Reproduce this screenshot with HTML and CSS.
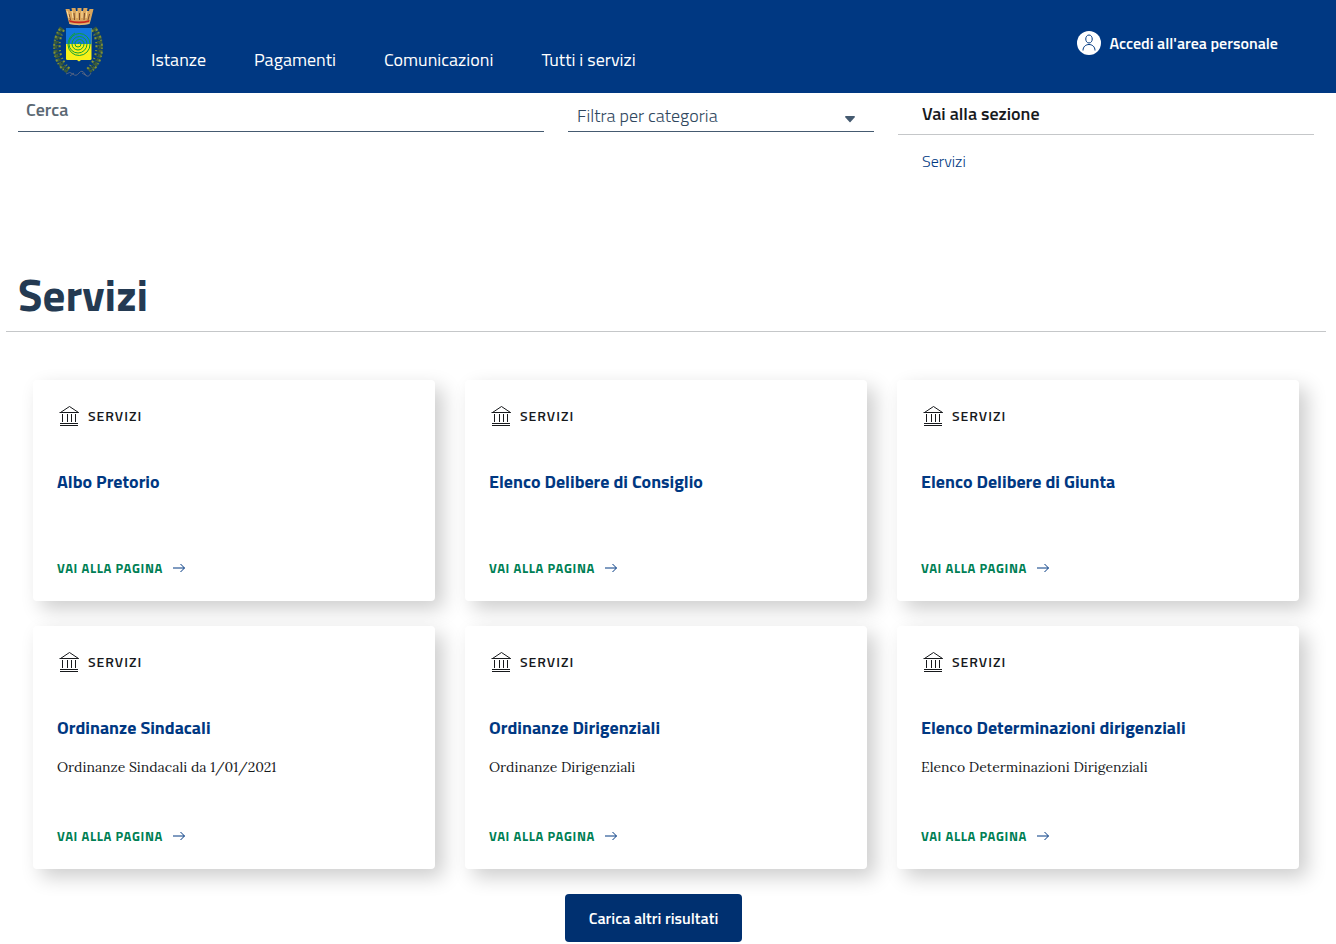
FILE: index.html
```
<!DOCTYPE html>
<html lang="it">

<head>
    <meta charset="UTF-8">
    <meta name="viewport" content="width=device-width, initial-scale=1.0">
    <title>Servizi</title>
    <link rel="stylesheet" href="styles.css">
</head>

<body>
    <!-- Shared icons -->
    <svg class="sprite" aria-hidden="true">
        <symbol id="icon-pa" viewBox="0 0 24 24">
            <path d="M3.500 8.500 12.500 2.500l9 6zM2.500 8.500h19M5.500 10v8M10.500 10v8M14.500 10v8M18.500 10v8M3 19.500h18M3 21.500h18" fill="none" stroke="currentColor" />
        </symbol>
        <symbol id="icon-arrow" viewBox="0 0 14 10">
            <path d="M1 5h11.500M8.500 1l4 4-4 4" fill="none" stroke="currentColor" />
        </symbol>
    </svg>

    <header class="header">
        <a href="#" class="logo" aria-label="Home">
            <svg width="54" height="72" viewBox="0 0 54 72">
                <!-- laurel and oak branches -->
                <g fill="none">
                    <path d="M11 22C2 34 2 55 17 65" stroke="#3c5c3c" stroke-width="5" stroke-dasharray="4 1 3 1" />
                    <path d="M9 23C0 34 1 56 14 65" stroke="#7f9038" stroke-width="2" stroke-dasharray="2 2 1 3" />
                    <path d="M13 24C6 36 7 52 19 63" stroke="#8a962f" stroke-width="2" stroke-dasharray="2 3 1 2" />
                    <path d="M11 25C4 36 5 53 17 65" stroke="#1d3f3a" stroke-dasharray="2 2" />
                    <path d="M43 22C52 34 52 55 38 65" stroke="#3c5c3c" stroke-width="5" stroke-dasharray="4 1 3 1" />
                    <path d="M45 23C54 34 53 56 41 65" stroke="#7f9038" stroke-width="2" stroke-dasharray="2 2 1 3" />
                    <path d="M41 24C48 36 47 52 36 63" stroke="#8a962f" stroke-width="2" stroke-dasharray="2 3 1 2" />
                    <path d="M43 25C50 36 49 53 38 65" stroke="#1d3f3a" stroke-dasharray="2 2" />
                    <path d="M15 68q4-3 7 0t6-1 6 1 6-1M19 70l4-3M36 70l-5-3" stroke="#536383" />
                </g>
                <!-- shield -->
                <path d="M15 22h25.500v31q0 1-1.500 1H30l-2 1.500L26 54h-9.500q-1.500 0-1.500-1z" fill="#f7f01a" />
                <path d="M15 22h25.500v16H15z" fill="#1478e0" />
                <path d="M27 38a1.500 1.500 0 0 1 3 0a3 3 0 0 1-6 0a4.500 4.500 0 0 1 9 0a6 6 0 0 1-12 0a7.500 7.500 0 0 1 15 0a9 9 0 0 1-18 0a10.500 10.500 0 0 1 21 0a11 11 0 0 1-22 1q0-8 7-12" fill="none" stroke="#12a235" />
                <!-- crown -->
                <path d="M14.500 3h4l.5 2h2l-.5-3h4l.5 3h1.500V2h4v3h1.500l.5-3h4l-.5 3h2l.500-2h4l-3 12-1 3q-10 2-20 0l-1-3z" fill="#d9a55c" />
                <path d="M18 8l1.500 6M23 7l.5 7M28.500 7v7M33.500 7l-.5 7M38.500 8 37 14" stroke="#7a4a2a" fill="none" />
                <path d="M16 5l2 7M21 5l1 7M26 5v7M31 5v7M36 5l-1 7" stroke="#ffe0a0" fill="none" />
                <path d="M18 14q10 3 20.500 0l-.5 2q-10 2.500-19.500 0z" fill="#c9281f" />
                <path d="M18.500 17.500q10 2.500 19 0" stroke="#e5bd80" fill="none" />
            </svg>
        </a>
        <nav class="nav">
            <a href="#">Istanze</a>
            <a href="#">Pagamenti</a>
            <a href="#">Comunicazioni</a>
            <a href="#">Tutti i servizi</a>
        </nav>
        <a href="#" class="login">
            <svg width="24" height="24" viewBox="0 0 24 24">
                <circle cx="12" cy="12" r="12" fill="#fff" />
                <path d="M12 4c4.300 0 4.300 8 0 8s-4.300-8 0-8zM6 19.500c0-8 12-8 12 0" fill="none" stroke="#003882" />
            </svg>
            <span>Accedi all'area personale</span>
        </a>
    </header>

    <main class="main">
        <div class="container">
            <div class="filters">
                <div class="col search">
                    <label for="search">Cerca</label>
                    <input type="search" id="search">
                </div>
                <div class="col filter">
                    <select id="category" aria-label="Filtra per categoria">
                        <option>Filtra per categoria</option>
                    </select>
                    <svg class="caret" width="12" height="8" viewBox="0 0 12 8" aria-hidden="true">
                        <path d="M1 2q0-1 1-1h8q1 0 1 1L6.500 7q-.5.500-1 0z" fill="#455a70" />
                    </svg>
                </div>
                <div class="col">
                    <div class="sections">
                        <h2>Vai alla sezione</h2>
                        <a href="#servizi">Servizi</a>
                    </div>
                </div>
            </div>

            <h1 id="servizi">Servizi</h1>

            <div class="cards">
                <article class="card">
                    <div class="category"><svg><use href="#icon-pa" /></svg>Servizi</div>
                    <h3><a href="#">Albo Pretorio</a></h3>
                    <p></p>
                    <a href="#" class="read-more">Vai alla pagina<svg><use href="#icon-arrow" /></svg></a>
                </article>
                <article class="card">
                    <div class="category"><svg><use href="#icon-pa" /></svg>Servizi</div>
                    <h3><a href="#">Elenco Delibere di Consiglio</a></h3>
                    <p></p>
                    <a href="#" class="read-more">Vai alla pagina<svg><use href="#icon-arrow" /></svg></a>
                </article>
                <article class="card">
                    <div class="category"><svg><use href="#icon-pa" /></svg>Servizi</div>
                    <h3><a href="#">Elenco Delibere di Giunta</a></h3>
                    <p></p>
                    <a href="#" class="read-more">Vai alla pagina<svg><use href="#icon-arrow" /></svg></a>
                </article>
                <article class="card">
                    <div class="category"><svg><use href="#icon-pa" /></svg>Servizi</div>
                    <h3><a href="#">Ordinanze Sindacali</a></h3>
                    <p>Ordinanze Sindacali da 1/01/2021</p>
                    <a href="#" class="read-more">Vai alla pagina<svg><use href="#icon-arrow" /></svg></a>
                </article>
                <article class="card">
                    <div class="category"><svg><use href="#icon-pa" /></svg>Servizi</div>
                    <h3><a href="#">Ordinanze Dirigenziali</a></h3>
                    <p>Ordinanze Dirigenziali</p>
                    <a href="#" class="read-more">Vai alla pagina<svg><use href="#icon-arrow" /></svg></a>
                </article>
                <article class="card">
                    <div class="category"><svg><use href="#icon-pa" /></svg>Servizi</div>
                    <h3><a href="#">Elenco Determinazioni dirigenziali</a></h3>
                    <p>Elenco Determinazioni Dirigenziali</p>
                    <a href="#" class="read-more">Vai alla pagina<svg><use href="#icon-arrow" /></svg></a>
                </article>
            </div>

            <div class="more">
                <button type="button">Carica altri risultati</button>
            </div>
        </div>
    </main>
</body>

</html>
```
FILE: styles.css
```
*, *::before, *::after {
    box-sizing: border-box;
}

body {
    margin: 0;
    background: #fff;
    color: #17191c;
    font-family: "Titillium Web", Roboto, sans-serif;
    font-size: 16px;
    line-height: 24px;
}

a {
    color: #003882;
    text-decoration: none;
}

a:hover {
    text-decoration: underline;
}

svg {
    display: block;
    flex-shrink: 0;
}

.sprite {
    display: none;
}

/* Header */
.header {
    display: flex;
    align-items: flex-start;
    padding: 6px 58px 15px 51px;
    background: #003882;
}

.header a {
    color: #fff;
}

.nav {
    display: flex;
    flex-wrap: wrap;
    gap: 48px;
    margin-left: 46px;
    padding-top: 42px;
    font-size: 18px;
    font-weight: 400;
}

.login {
    display: flex;
    align-items: center;
    gap: 8px;
    margin-left: auto;
    padding-top: 25px;
    font-weight: 600;
}

/* Search and filters */
.main {
    padding-right: 4px;
}

.container {
    max-width: 1320px;
    margin: 0 auto;
}

.filters {
    display: grid;
    grid-template-columns: 5fr 3fr 4fr;
    min-height: 175px;
}

.col {
    position: relative;
    padding: 0 12px;
}

.search label {
    position: absolute;
    top: 5px;
    left: 20px;
    color: #5a6772;
    font-size: 18px;
    font-weight: 600;
}

.search input,
.filter select {
    display: block;
    width: 100%;
    height: 39px;
    padding: 6px 9px 0;
    border: 0;
    border-bottom: 1px solid #455a70;
    border-radius: 0;
    background: transparent;
    color: #2f475e;
    font-family: inherit;
    font-size: 18px;
    font-weight: 300;
    appearance: none;
}

.caret {
    position: absolute;
    top: 22px;
    right: 30px;
    pointer-events: none;
}

.sections h2 {
    margin: 0 0 14px;
    padding: 9px 24px 8px;
    border-bottom: 1px solid #c5c7c9;
    font-size: 18px;
    line-height: 24px;
    font-weight: 600;
}

.sections a {
    margin-left: 24px;
    font-weight: 300;
}

/* Results */
h1 {
    margin: 0;
    padding: 0 12px 11px;
    border-bottom: 1px solid #c5c7c9;
    color: #243a52;
    font-size: 45px;
    line-height: 52px;
    font-weight: 700;
}

.cards {
    display: grid;
    grid-template-columns: repeat(3, 1fr);
    gap: 25px 30px;
    padding: 48px 27px 25px;
}

.card {
    display: flex;
    flex-direction: column;
    align-items: flex-start;
    padding: 24px 24px 21px;
    border-radius: 4px;
    background: #fff;
    box-shadow: 8px 8px 20px rgba(0, 0, 0, 0.2);
}

.category {
    display: flex;
    align-items: center;
    gap: 7px;
    margin-bottom: 42px;
    font-size: 14px;
    font-weight: 600;
    letter-spacing: 1px;
    text-transform: uppercase;
}

.category svg {
    width: 24px;
    height: 24px;
}

.card h3 {
    margin: 0 0 16px;
    font-size: 18px;
    line-height: 24px;
    font-weight: 700;
}

.card p {
    margin: 0 0 46px;
    font-family: Lora, "Liberation Serif", serif;
    font-size: 14px;
    line-height: 22px;
}

.read-more {
    display: flex;
    align-items: center;
    gap: 9px;
    color: #008055;
    font-size: 13px;
    font-weight: 700;
    letter-spacing: 0.05em;
    text-transform: uppercase;
}

.read-more svg {
    width: 14px;
    height: 10px;
    color: #003882;
}

.more {
    display: flex;
    justify-content: center;
    padding: 0 25px 2px 0;
}

.more button {
    padding: 12px 24px;
    border: 0;
    border-radius: 4px;
    background: #003070;
    color: #fff;
    font-family: inherit;
    font-size: 16px;
    line-height: 24px;
    font-weight: 600;
    cursor: pointer;
}

.more button:hover {
    background: #00285c;
}

@media (max-width: 900px) {
    .filters,
    .cards {
        grid-template-columns: 1fr;
    }
}
```
